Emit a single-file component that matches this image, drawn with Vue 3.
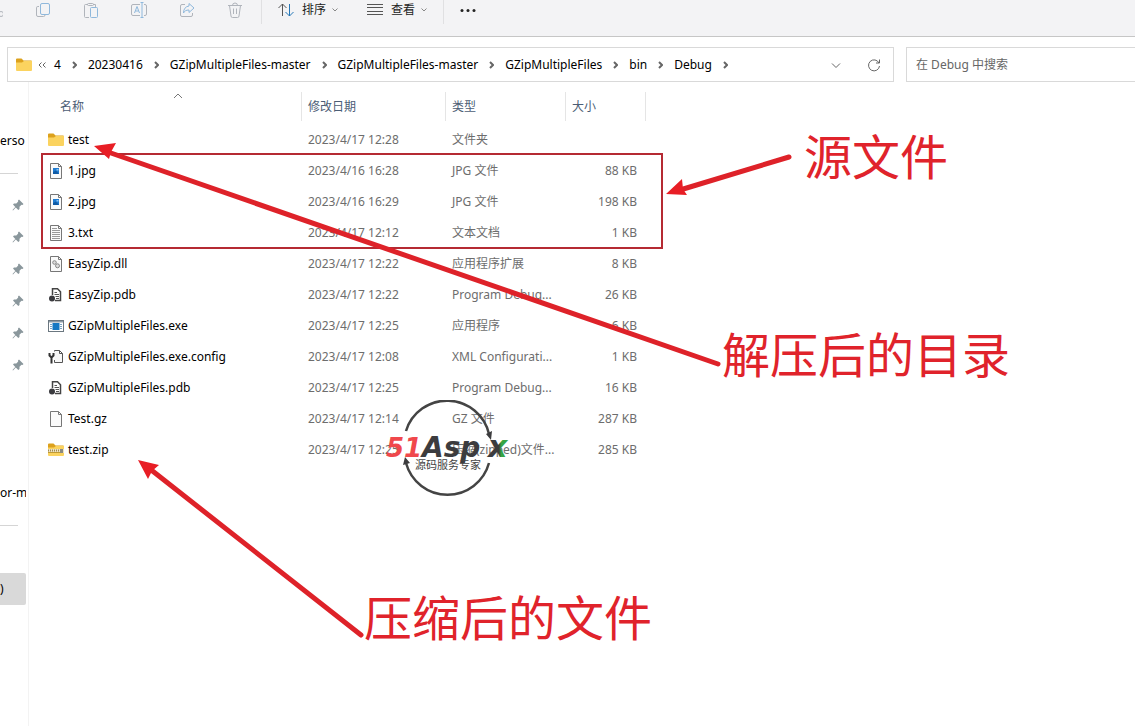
<script setup>
import { ref } from 'vue'

const search = ref('')

const crumbs = ['4', '20230416', 'GZipMultipleFiles-master', 'GZipMultipleFiles-master', 'GZipMultipleFiles', 'bin', 'Debug']

const files = [
  { name: 'test', icon: 'folder', date: '2023/4/17 12:28', type: '文件夹', size: '' },
  { name: '1.jpg', icon: 'image', date: '2023/4/16 16:28', type: 'JPG 文件', size: '88 KB' },
  { name: '2.jpg', icon: 'image', date: '2023/4/16 16:29', type: 'JPG 文件', size: '198 KB' },
  { name: '3.txt', icon: 'text', date: '2023/4/17 12:12', type: '文本文档', size: '1 KB' },
  { name: 'EasyZip.dll', icon: 'dll', date: '2023/4/17 12:22', type: '应用程序扩展', size: '8 KB' },
  { name: 'EasyZip.pdb', icon: 'pdb', date: '2023/4/17 12:22', type: 'Program Debug...', size: '26 KB' },
  { name: 'GZipMultipleFiles.exe', icon: 'exe', date: '2023/4/17 12:25', type: '应用程序', size: '6 KB' },
  { name: 'GZipMultipleFiles.exe.config', icon: 'config', date: '2023/4/17 12:08', type: 'XML Configurati...', size: '1 KB' },
  { name: 'GZipMultipleFiles.pdb', icon: 'pdb', date: '2023/4/17 12:25', type: 'Program Debug...', size: '16 KB' },
  { name: 'Test.gz', icon: 'blank', date: '2023/4/17 12:14', type: 'GZ 文件', size: '287 KB' },
  { name: 'test.zip', icon: 'zip', date: '2023/4/17 12:25', type: '压缩(zipped)文件...', size: '285 KB' }
]

// Left pane entries, one per 32px row
const navRows = [
  { kind: 'label', text: 'erso' },
  { kind: 'line' },
  { kind: 'pin' },
  { kind: 'pin' },
  { kind: 'pin' },
  { kind: 'pin' },
  { kind: 'pin' },
  { kind: 'pin' },
  { kind: 'empty' },
  { kind: 'empty' },
  { kind: 'empty' },
  { kind: 'label', text: 'or-m' },
  { kind: 'line' },
  { kind: 'empty' },
  { kind: 'selected', text: ')' }
]
</script>

<template>
  <div class="explorer">
    <!-- Command bar -->
    <header class="toolbar">
      <button class="tool first" aria-label="剪切">
        <svg width="16" height="16" viewBox="0 0 16 16"><circle cx="14" cy="12" r="2.500" /></svg>
      </button>
      <button class="tool" aria-label="复制">
        <svg width="16" height="16" viewBox="0 0 16 16">
          <path d="M4 4.500H2.800A1.300 1.300 0 0 0 1.500 5.800V13A1.500 1.500 0 0 0 3 14.500H8.500A1.500 1.500 0 0 0 10 13" />
          <rect class="blue" x="5.500" y="1.500" width="9" height="11" rx="1.500" />
        </svg>
      </button>
      <button class="tool" aria-label="粘贴">
        <svg width="16" height="16" viewBox="0 0 16 16">
          <path d="M5 2.500H2.500A1 1 0 0 0 1.500 3.500V14.500A1 1 0 0 0 2.500 15.500H6M10 2.500H12.500V5" />
          <rect x="4.500" y="1.500" width="6" height="2" rx="1" />
          <rect class="blue" x="7.500" y="5.500" width="7" height="10" rx="1" />
        </svg>
      </button>
      <button class="tool" aria-label="重命名">
        <svg width="16" height="16" viewBox="0 0 16 16">
          <path d="M9 2.500H2A1.500 1.500 0 0 0 .5 4V12A1.500 1.500 0 0 0 2 13.500H9M13 2.500H14A1.500 1.500 0 0 1 15.500 4V12A1.500 1.500 0 0 1 14 13.500H13" />
          <path class="blue" d="M3.500 11 6 4.500 8.500 11M4.500 9H7.500M9.500 .5H12.500M11 .5V15.500M9.500 15.500H12.500" />
        </svg>
      </button>
      <button class="tool" aria-label="共享">
        <svg width="16" height="16" viewBox="0 0 16 16">
          <path d="M6 2.500H3A1.500 1.500 0 0 0 1.500 4V13A1.500 1.500 0 0 0 3 14.500H12A1.500 1.500 0 0 0 13.500 13V11" />
          <path class="blue" d="M10 1.500 15 6 10 10.500V8C7 8 5.500 9 4.500 11 4.500 7 6.500 4.500 10 4Z" />
        </svg>
      </button>
      <button class="tool" aria-label="删除">
        <svg width="16" height="16" viewBox="0 0 16 16">
          <path d="M1 3.500H15M5.500 3.500A2.500 2.500 0 0 1 10.500 3.500M2.500 3.500 4 14A1.500 1.500 0 0 0 5.500 15.500H10.500A1.500 1.500 0 0 0 12 14L13.500 3.500M6.500 6.500V12M9.500 6.500V12" />
        </svg>
      </button>
      <span class="divider"></span>
      <button class="menu">
        <svg class="dark" width="16" height="16" viewBox="0 0 16 16">
          <path d="M4.500 14V2M.5 6 4.500 2 8.500 6" />
          <path class="accent" d="M11.500 2V14M7.500 10 11.500 14 15.500 10" />
        </svg>
        <span>排序</span>
        <svg class="chevron" width="6" height="6" viewBox="0 0 6 6"><path d="M.5 1.500 3 4 5.500 1.500" /></svg>
      </button>
      <button class="menu">
        <svg class="dark" width="16" height="16" viewBox="0 0 16 16">
          <path d="M0 2.500H16M0 5.500H16M0 9.500H16M0 12.500H16" />
        </svg>
        <span>查看</span>
        <svg class="chevron" width="6" height="6" viewBox="0 0 6 6"><path d="M.5 1.500 3 4 5.500 1.500" /></svg>
      </button>
      <span class="divider"></span>
      <button class="menu" aria-label="更多">
        <svg class="dots" width="16" height="16" viewBox="0 0 16 16">
          <circle cx="2" cy="8.500" r="1.500" /><circle cx="8" cy="8.500" r="1.500" /><circle cx="14" cy="8.500" r="1.500" />
        </svg>
      </button>
    </header>

    <!-- Address and search -->
    <div class="location">
      <nav class="address">
        <svg width="16" height="16" viewBox="0 0 16 16">
          <path fill="#dca11d" d="M0 2.500A1 1 0 0 1 1 1.500H5.500L7.500 3.500H15A1 1 0 0 1 16 4.500V8H0Z" />
          <path fill="#fbd35f" d="M0 5.500H6L8 4H16V13A1 1 0 0 1 15 14H1A1 1 0 0 1 0 13Z" />
        </svg>
        <svg class="back" width="8" height="8" viewBox="0 0 8 8"><path d="M3.500 1.500 1 4 3.500 6.500M7.500 1.500 5 4 7.500 6.500" /></svg>
        <template v-for="(crumb, i) in crumbs" :key="i">
          <a href="#">{{ crumb }}</a>
          <svg class="sep" width="5" height="8" viewBox="0 0 5 8"><path d="M1 1 4 4 1 7" /></svg>
        </template>
        <button class="history" aria-label="历史">
          <svg width="10" height="10" viewBox="0 0 10 10"><path d="M1 3.500 5 7.500 9 3.500" /></svg>
        </button>
        <button class="refresh" aria-label="刷新">
          <svg width="14" height="14" viewBox="0 0 14 14"><path d="M12 5A5.500 5.500 0 1 0 12.500 8M12.500 1.500V5H9" /></svg>
        </button>
      </nav>
      <input v-model="search" class="search" type="text" aria-label="搜索" placeholder="在 Debug 中搜索" />
    </div>

    <div class="content">
      <!-- Navigation pane -->
      <aside class="sidebar">
        <div v-for="(row, i) in navRows" :key="i" class="nav-row" :class="row.kind">
          <svg v-if="row.kind === 'pin'" width="12" height="12" viewBox="0 0 12 12">
            <path fill="#8a979c" d="M7 .5 11.500 5 10.500 6 9.500 5.800 7.500 7.800 7.500 10 6.300 11 3.800 8.500 1 11.500 .5 11 3.300 8 1 5.600 2 4.500 4.300 4.500 6.200 2.600 6 1.500Z" />
          </svg>
          <hr v-else-if="row.kind === 'line'" />
          <span v-else>{{ row.text }}</span>
        </div>
      </aside>

      <!-- File list -->
      <main class="list">
        <table>
          <colgroup>
            <col class="col-name" />
            <col class="col-date" />
            <col class="col-type" />
            <col class="col-size" />
          </colgroup>
          <thead>
            <tr>
              <th>
                <div class="head name-head">
                  名称
                  <svg class="sorted" width="10" height="6" viewBox="0 0 10 6"><path d="M1 5 5 1 9 5" /></svg>
                </div>
              </th>
              <th><div class="head">修改日期</div></th>
              <th><div class="head">类型</div></th>
              <th><div class="head">大小</div></th>
            </tr>
          </thead>
          <tbody>
            <tr v-for="file in files" :key="file.name">
              <td>
                <div class="file">
                  <svg width="16" height="16" viewBox="0 0 16 16">
                    <g v-if="file.icon === 'folder' || file.icon === 'zip'">
                      <path fill="#dca11d" d="M0 2.500A1 1 0 0 1 1 1.500H5.500L7.500 3.500H15A1 1 0 0 1 16 4.500V8H0Z" />
                      <path fill="#fbd35f" d="M0 5.500H6L8 4H16V13A1 1 0 0 1 15 14H1A1 1 0 0 1 0 13Z" />
                      <g v-if="file.icon === 'zip'">
                        <path fill="#eee3c0" d="M0 7H16V11H0Z" />
                        <path stroke="#a08a50" stroke-width="2" stroke-dasharray="1 1" d="M0 8.500H16" />
                        <path stroke="#c09a35" d="M0 10.500H12" />
                        <rect x="12" y="7" width="3" height="4" fill="#8a8a80" />
                      </g>
                    </g>
                    <g v-else-if="file.icon === 'exe'">
                      <rect x=".5" y="2.500" width="15" height="11" fill="#fff" stroke="#6b7780" />
                      <path fill="#8d9ba5" d="M1 3H15V4.500H1Z" />
                      <rect x="4.500" y="5" width="7" height="7" fill="#1578c2" />
                      <path stroke="#7aa5c4" d="M2 6.500H4M2 8.500H4M2 10.500H4M12 6.500H14M12 8.500H14M12 10.500H14" />
                    </g>
                    <g v-else-if="file.icon === 'pdb'">
                      <path fill="#fff" stroke="#444" stroke-width="1.500" d="M4.500 8V1.700H9.500L12.500 4.700V13.500H7" />
                      <path stroke="#555" d="M6.500 5.500H9M6.500 7.500H11M7.500 9.500H11M8 11.500H11" />
                      <circle cx="4" cy="11.500" r="3" fill="#3b3b3f" />
                    </g>
                    <g v-else-if="file.icon === 'config'">
                      <path fill="#f8f8f8" stroke="#555" d="M6.500 2.500V1.500H11.500L14.500 4.500V13.500H6.500V11M11.500 1.500V4.500H14.500" />
                      <path fill="none" stroke="#333" stroke-width="2" d="M1.500 4V6.500L3.500 8.500 5.500 6.500V4M3.500 8V14.500" />
                    </g>
                    <g v-else>
                      <path fill="#fafafa" stroke="#777" d="M2.500 .5H10.500L13.500 3.500V15.500H2.500Z" />
                      <path fill="none" stroke="#777" d="M10.500 .5V3.500H13.500" />
                      <g v-if="file.icon === 'image'">
                        <rect x="5" y="5" width="6" height="6" fill="#1f7bd0" />
                        <path fill="#0f5aa5" d="M5 11V9L8 7.500 11 11Z" />
                        <path fill="#8cc4f4" d="M8.500 6H10.500V7.500H8.500Z" />
                      </g>
                      <path v-if="file.icon === 'text'" stroke="#999" d="M4 3.500H9M4 5.500H12M4 7.500H12M4 9.500H12M4 11.500H12M4 13.500H12" />
                      <g v-if="file.icon === 'dll'" fill="#ddd" stroke="#888">
                        <circle cx="6.500" cy="6.500" r="1.800" />
                        <circle cx="9.500" cy="9.800" r="2" />
                      </g>
                    </g>
                  </svg>
                  <span>{{ file.name }}</span>
                </div>
              </td>
              <td>{{ file.date }}</td>
              <td>{{ file.type }}</td>
              <td class="size">{{ file.size }}</td>
            </tr>
          </tbody>
        </table>
      </main>
    </div>

    <!-- Watermark stamp -->
    <svg class="stamp" width="130" height="96" viewBox="0 0 130 96">
      <defs>
        <linearGradient id="x-fill" x1="102" y1="0" x2="124" y2="0" gradientUnits="userSpaceOnUse">
          <stop offset="0.500" stop-color="#3c3c3e" />
          <stop offset="0.600" stop-color="#36a544" />
        </linearGradient>
      </defs>
      <path class="ring" d="M20 31A43 43 0 0 1 103 34M103 63A43 43 0 0 1 20 63" />
      <path fill="#3c3c3e" d="M100 34 106 31 105 40ZM17 65 19 57 24 63Z" />
      <text class="brand" y="57">
        <tspan class="red" x="0">51</tspan><tspan x="36">Asp</tspan><tspan class="green" x="102">x</tspan>
      </text>
      <text class="slogan" x="29" y="69">源码服务专家</text>
    </svg>

    <!-- Red notes drawn over the window -->
    <svg class="notes" width="1135" height="726" viewBox="0 0 1135 726">
      <rect x="42" y="154" width="620" height="94" />
      <path class="shaft" d="M108 152 718 364M680 190 789 157M150 469 361 635" />
      <path class="tip" d="M94 146 116 143 111 152 109 159ZM666 194 682 179 683 189 687 195ZM138 460 159 465 152 471 148 479Z" />
      <text x="804" y="175">源文件</text>
      <text x="722" y="373">解压后的目录</text>
      <text x="364" y="636">压缩后的文件</text>
    </svg>
  </div>
</template>

<style>
body {
  margin: 0;
  background: #fff;
}
</style>

<style scoped>
.explorer {
  position: relative;
  display: flex;
  flex-direction: column;
  min-height: 100vh;
  overflow: hidden;
  font-family: "Noto Sans", "Noto Sans CJK SC", sans-serif;
  font-size: 12px;
  line-height: 16px;
  color: #000;
  background: #fff;
}

svg {
  flex-shrink: 0;
}

button {
  padding: 0;
  border: none;
  background: none;
  font: inherit;
  color: inherit;
}

/* Command bar */
.toolbar {
  display: flex;
  align-items: flex-start;
  height: 36px;
  background: #f3f3f5;
  border-bottom: 1px solid #c6c6c6;
}

.tool {
  display: flex;
  align-items: center;
  justify-content: center;
  width: 48px;
  height: 19px;
}

.tool.first {
  box-sizing: border-box;
  justify-content: flex-end;
  width: 19px;
  padding-right: 16px;
  overflow: hidden;
}

.tool svg {
  fill: none;
  stroke: #b0b4bb;
}

.tool .blue {
  stroke: #8fb8dc;
}

.divider {
  width: 1px;
  height: 24px;
  margin-left: 2px;
  background: #e0e0e2;
}

.menu {
  display: flex;
  align-items: center;
  height: 19px;
  padding: 0 13px 0 16px;
  color: #222;
}

.menu + .divider {
  margin-left: 3px;
}

.menu span {
  margin: 0 6px 0 8px;
}

.dark {
  fill: none;
  stroke: #555;
}

.dark .accent {
  stroke: #2678b8;
}

.dots {
  fill: #222;
}

.chevron {
  fill: none;
  stroke: #888;
}

/* Address and search */
.location {
  display: flex;
  gap: 12px;
  padding: 10px 0 0 7px;
}

.address {
  display: flex;
  flex: 1;
  align-items: center;
  box-sizing: border-box;
  height: 35px;
  padding-left: 8px;
  border: 1px solid #d9d9d9;
}

.address a {
  color: #000;
  text-decoration: none;
}

.back,
.sep,
.history svg,
.refresh svg {
  fill: none;
  stroke: #666;
}

.sep {
  margin: 0 11px;
  stroke-width: 2;
}

.back {
  margin: 0 8px 0 6px;
}

.history {
  display: flex;
  margin-left: auto;
}

.refresh {
  display: flex;
  margin: 0 12px 0 26px;
}

.search {
  box-sizing: border-box;
  width: 229px;
  height: 35px;
  padding: 0 9px;
  border: 1px solid #d9d9d9;
  border-right: none;
  border-radius: 0;
  outline: none;
  background: #fff;
  font: inherit;
}

.search::placeholder {
  color: #666;
  opacity: 1;
}

/* Panes */
.content {
  display: flex;
  flex: 1;
}

.sidebar {
  width: 28px;
  padding-top: 43px;
  border-right: 1px solid #f3f3f3;
}

.nav-row {
  display: flex;
  align-items: center;
  width: 26px;
  height: 32px;
  overflow: hidden;
  white-space: nowrap;
}

.nav-row.pin {
  box-sizing: border-box;
  padding-left: 12px;
}

.nav-row.selected {
  background: #d9d9d9;
  border-radius: 0 2px 2px 0;
}

.nav-row hr {
  width: 18px;
  margin: 0;
  border: none;
  border-top: 1px solid #d5d5d5;
}

.list {
  flex: 1;
  padding-top: 10px;
}

table {
  width: 617px;
  border-collapse: collapse;
  table-layout: fixed;
}

.col-name {
  width: 273px;
}

.col-date {
  width: 144px;
}

.col-type {
  width: 120px;
}

.col-size {
  width: 80px;
}

th {
  height: 32px;
  padding: 0;
  font-weight: normal;
  text-align: left;
  vertical-align: top;
}

.head {
  position: relative;
  box-sizing: border-box;
  height: 29px;
  padding-left: 6px;
  border-right: 1px solid #e5e5e5;
  line-height: 29px;
  color: #4c5d75;
}

.name-head {
  padding-left: 31px;
}

.sorted {
  position: absolute;
  top: 1px;
  right: 118px;
  fill: none;
  stroke: #777;
}

td {
  height: 31px;
  padding: 0 0 0 6px;
  white-space: nowrap;
  color: #6d6d6d;
}

td:first-child {
  padding-left: 19px;
  color: #000;
}

.file {
  display: flex;
  align-items: center;
  gap: 4px;
}

.size {
  padding-right: 9px;
  text-align: right;
}

/* Overlays */
.stamp {
  position: absolute;
  top: 400px;
  left: 386px;
  pointer-events: none;
}

.ring {
  fill: none;
  stroke: #444;
  stroke-width: 2.500;
}

.brand {
  font-family: "DejaVu Sans", sans-serif;
  font-size: 28px;
  font-style: italic;
  font-weight: bold;
  fill: #3c3c3e;
}

.brand .red {
  font-size: 26px;
  fill: #f0484c;
}

.brand .green {
  font-size: 30px;
  fill: url(#x-fill);
}

.slogan {
  font-size: 11px;
  fill: #444;
}

.notes {
  position: absolute;
  top: 0;
  left: 0;
  pointer-events: none;
}

.notes rect {
  fill: none;
  stroke: #b52a33;
  stroke-width: 2;
}

.notes .shaft {
  fill: none;
  stroke: #de2229;
  stroke-width: 5;
  stroke-linecap: round;
}

.notes .tip {
  fill: #e81e25;
}

.notes text {
  font-size: 48px;
  fill: #e0232b;
}
</style>
